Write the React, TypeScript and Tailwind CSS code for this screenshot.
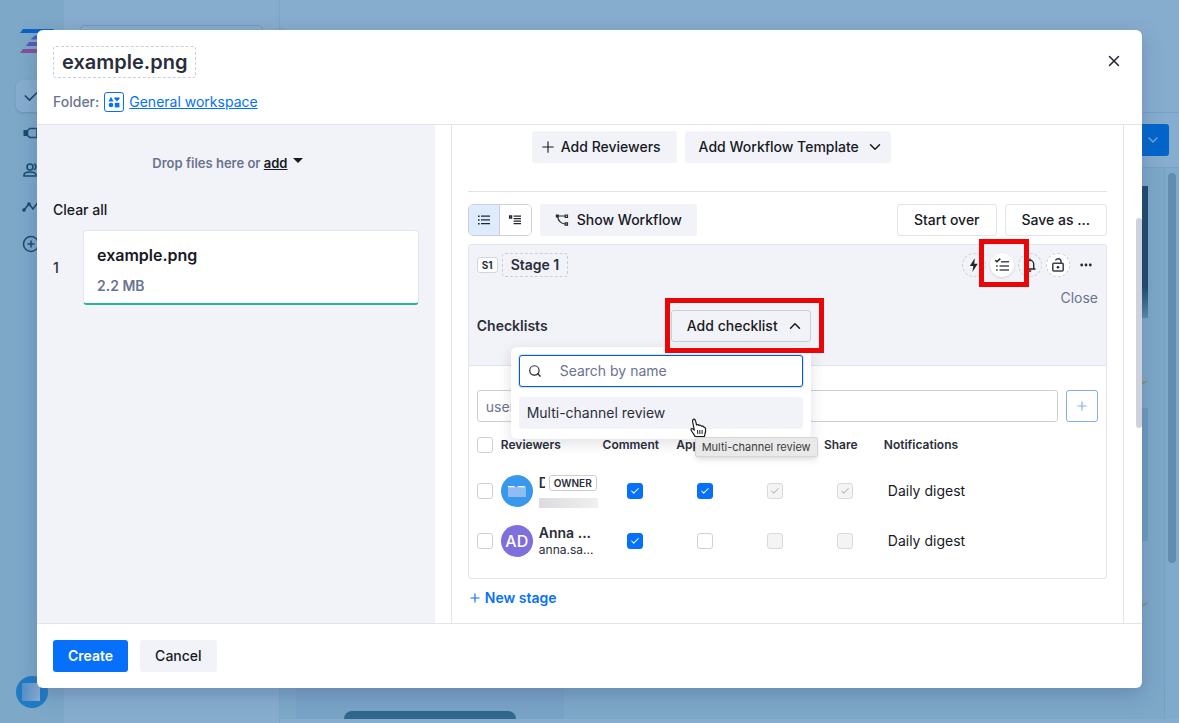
import React from "react";
import clsx from "clsx";
import {
  Check,
  ChevronDown,
  ChevronUp,
  CirclePlus,
  Plus,
  Search,
  X,
} from "lucide-react";

type Permission = {
  checked: boolean;
  disabled?: boolean;
};

type Reviewer = {
  id: string;
  name: string;
  email: string;
  initials?: string;
  owner?: boolean;
  permissions: Permission[];
  notifications: string;
};

const columns = ["Comment", "Approve", "Download", "Share"];

const reviewers: Reviewer[] = [
  {
    id: "owner",
    name: "D",
    email: "",
    owner: true,
    permissions: [
      { checked: true },
      { checked: true },
      { checked: true, disabled: true },
      { checked: true, disabled: true },
    ],
    notifications: "Daily digest",
  },
  {
    id: "anna",
    name: "Anna ...",
    email: "anna.sa...",
    initials: "AD",
    permissions: [
      { checked: true },
      { checked: false },
      { checked: false, disabled: true },
      { checked: false, disabled: true },
    ],
    notifications: "Daily digest",
  },
];

const Checkbox = ({
  label,
  checked = false,
  disabled = false,
}: {
  label: string;
  checked?: boolean;
  disabled?: boolean;
}) => (
  <label className="grid place-items-center *:[grid-area:1/1]">
    <input
      type="checkbox"
      aria-label={label}
      defaultChecked={checked}
      disabled={disabled}
      className={clsx(
        "peer h-4 w-4 appearance-none rounded-[3px] border",
        disabled
          ? "border-[#d9dadd] bg-[#f4f4f5]"
          : "border-[#cfd1d8] bg-white checked:border-[#0670fb] checked:bg-[#0670fb]"
      )}
    />
    <Check
      className={clsx(
        "pointer-events-none hidden h-2.5 w-2.5 peer-checked:block",
        disabled ? "text-[#b5b7bb]" : "text-white"
      )}
      strokeWidth={2.5}
    />
  </label>
);

/* ---------- Icons ---------- */

const ListIcon = () => (
  <svg viewBox="0 0 14 14" className="h-3.5 w-3.5" fill="#23262f">
    <path d="M1 2.5h1.6v1.4H1zM4 2.5h9v1.2H4zM1 6.3h1.6v1.4H1zM4 6.3h9v1.2H4zM1 10.1h1.6v1.4H1zM4 10.1h9v1.2H4z" />
  </svg>
);

const DetailIcon = () => (
  <svg viewBox="0 0 14 14" className="h-3.5 w-3.5" fill="#23262f">
    <path
      d="M1.6 3h2v2h-2z"
      fill="none"
      stroke="#23262f"
      strokeWidth="1.3"
    />
    <path d="M5.6 2.5H13v1.2H5.6zM5.6 5H13v1.2H5.6zM5.6 7.5H13v1.2H5.6zM5.6 10H13v1.2H5.6z" />
  </svg>
);

const WorkflowIcon = () => (
  <svg
    viewBox="0 0 14 14"
    className="h-3.5 w-3.5"
    fill="none"
    stroke="#23262f"
    strokeWidth="1.2"
  >
    <path d="M3 3h7M2.8 4c.4 3.6 2.6 6.2 7 7" />
    <path d="M1.400 2h1.800v1.800H1.400z" fill="#23262f" />
    <path d="M10.2 2h2.3v2.3h-2.3zM10.2 9.8h2.3v2.3h-2.3z" />
  </svg>
);

const ChecklistIcon = () => (
  <svg viewBox="0 0 16 16" className="h-4 w-4" fill="none">
    <path
      d="M1.3 3.2l1.6 1.6L6.3 1.6"
      stroke="#23262f"
      strokeWidth="1.5"
    />
    <path
      d="M7 4.8h8M5.5 9H15M5.5 13H15M2 9h1.8M2 13h1.800"
      stroke="#4a4d58"
      strokeWidth="1.5"
    />
  </svg>
);

const BoltIcon = () => (
  <svg viewBox="0 0 16 16" className="h-4 w-4" fill="#23262f">
    <path d="M8.8 1L3.8 9h3.5L6.4 15l5.4-8.2H8.3z" />
  </svg>
);

const BellIcon = () => (
  <svg
    viewBox="0 0 16 16"
    className="h-4 w-4"
    fill="none"
    stroke="#23262f"
    strokeWidth="1.4"
  >
    <path d="M2.5 12h11M4.3 12V7a3.7 3.7 0 017.4 0v5M8 1.5v2M6.8 14h2.4" />
  </svg>
);

const LockOpenIcon = () => (
  <svg
    viewBox="0 0 16 16"
    className="h-4 w-4"
    fill="none"
    stroke="#3b3e49"
    strokeWidth="1.5"
  >
    <rect x="2.8" y="6.3" width="10.4" height="7.8" rx="1" />
    <path d="M11 6V4.3C11 .9 5.7.9 5.7 3.6" />
    <circle cx="8" cy="10.2" r="1.3" fill="#23262f" stroke="none" />
  </svg>
);

const PointerCursor = () => (
  <svg viewBox="0 0 17 20" className="h-5 w-[17px]">
    <path
      d="M5 18.5c-.5-1.7-1.6-2.6-2.6-4.2C1.5 12.8.6 12 1 11.2c.6-1 2-.4 3.3 1L2.7 4C2.4 2.5 2.8 1.3 3.7 1.2c1-.1 1.6.7 1.9 2L6.6 7c1-.7 2-.4 2.4.5 1-.6 2-.2 2.4.7 1-.4 2 0 2.3 1 .9-.2 1.6.4 1.8 1.4.3 2.200.4 3.400-.5 5l-.5 2.900z"
      fill="#fff"
      stroke="#1b1b1b"
      strokeWidth="1.2"
      strokeLinejoin="round"
    />
    <path
      d="M7.5 12l.3 4M9.8 12l.1 4M12.1 12v4"
      stroke="#1b1b1b"
      strokeWidth="1"
    />
  </svg>
);

const Logo = () => (
  <svg viewBox="0 0 34 26" className="h-[26px] w-[34px]">
    <path d="M3 0h31l-3 4H0z" fill="#0d62c4" />
    <path d="M15 6.5h14l-2 4H10.5z" fill="#3d5ecb" />
    <path d="M9 13h14l-2 4H6z" fill="#5e55b8" />
    <path d="M3 20h30l-3 4H0z" fill="#84509b" />
  </svg>
);

/* ---------- Page behind the dialog ---------- */

const AppBackdrop = () => (
  <div className="flex min-h-screen bg-[#86adce]" aria-hidden="true">
    <nav className="flex w-16 flex-col bg-[#7da8c8] pt-[29px] text-[#154a70]">
      <div className="pl-5">
        <Logo />
      </div>
      <div className="mt-[25px] ml-4 flex h-8 items-center rounded-md bg-[#86adce] pl-1.5 shadow-sm">
        <Check className="h-5 w-5" />
      </div>
      <div className="flex flex-1 flex-col gap-[19px] pt-3 pl-[22px]">
        <svg
          viewBox="0 0 18 18"
          className="h-[18px] w-[18px]"
          fill="none"
          stroke="currentColor"
          strokeWidth="1.6"
        >
          <path d="M3.500 6v6" strokeWidth="4" />
          <path d="M5.500 6.500L8 4.500h7v9H8l-2.500-2z" />
        </svg>
        <svg
          viewBox="0 0 18 18"
          className="h-[18px] w-[18px]"
          fill="none"
          stroke="currentColor"
          strokeWidth="1.6"
        >
          <circle cx="8" cy="6" r="3" />
          <path d="M2 15v-1c0-4 12-4 12 0v1zM12 3c2.5.5 2.5 5 0 6" />
        </svg>
        <svg
          viewBox="0 0 18 18"
          className="h-[18px] w-[18px]"
          fill="none"
          stroke="currentColor"
          strokeWidth="1.6"
        >
          <path d="M2 12l5-6 4 5 6-8" />
          <circle cx="2" cy="12" r="1" />
          <circle cx="7" cy="6" r="1" />
        </svg>
        <CirclePlus className="h-[18px] w-[18px]" />
      </div>
      <div className="mb-[15px] ml-4 flex h-8 w-8 items-center rounded-full bg-[#1f7bc3] pl-1.5">
        <div className="h-[18px] w-[18px] bg-linear-to-r from-[#558fc6] to-[#8ab0d8]" />
      </div>
    </nav>
    <div className="w-[216px] border-r border-[#7ba4c6] pt-[25px] pl-4">
      <div className="h-8 w-[183px] rounded-sm border border-[#7199bb]" />
    </div>
    <div className="flex flex-1 flex-col">
      <div className="flex h-[113px] items-start border-b border-[#78a1c3] pt-[28px]">
        <div className="-ml-3 h-6 w-6 rounded-full border border-[#7ba4c6]" />
      </div>
      <div className="flex h-[55px] items-center justify-end border-b border-[#78a1c3] pr-2.5">
        <div className="flex h-8 w-8 items-center justify-center rounded-[3px] bg-[#0265cb]">
          <ChevronDown className="h-4 w-4 text-[#75a9dc]" />
        </div>
      </div>
      <div className="flex flex-1 bg-[#7da8c8]">
        <div className="flex flex-1 flex-col justify-end pl-4">
          <div className="flex w-[268px] justify-center bg-[#79a3c6] pt-6">
            <div className="h-2 w-[172px] rounded-t-full bg-[#31678d]" />
          </div>
        </div>
        <div className="flex w-10 flex-col pt-[18px]">
          <div className="h-[100px] bg-[#1d496a]" />
          <div className="h-8 bg-linear-to-b from-[#1d496a] to-[#5b8eae]" />
          <div className="h-[66px] rounded-br-md border-b-2 border-[#84946b] bg-[#80aacb]" />
          <div className="mt-6 h-[133px] bg-[#6f9cbf]" />
          <div className="h-[65px] rounded-br-md border-b-2 border-[#84946b] bg-[#80aacb]" />
        </div>
        <div className="ml-4 w-[15px] border-l border-[#76a0c1] bg-[#80aacb] pt-[5px] pl-[3px]">
          <div className="h-[390px] w-2 rounded-full bg-[#628dae]" />
        </div>
      </div>
      <div className="h-1" />
    </div>
  </div>
);

/* ---------- Dialog parts ---------- */

const FilesPanel = () => (
  <aside className="bg-[#f2f3f8] px-4 pt-7">
    <p className="flex items-start justify-center pr-4 text-[13px] leading-5 font-semibold text-[#6a7390]">
      Drop files here or&nbsp;
      <button type="button" className="text-[#171a24] underline">
        add
      </button>
      <span className="mt-[5px] ml-1.5 h-0 w-0 border-x-[5px] border-t-[5px] border-x-transparent border-t-[#171a24]" />
    </p>
    <button
      type="button"
      className="mt-[27px] block text-sm leading-5 font-medium text-[#171a24]"
    >
      Clear all
    </button>
    <div className="mt-[10px] flex items-center">
      <span className="w-[30px] text-sm font-medium text-[#2a2e3b]">1</span>
      <div className="flex-1 rounded-sm border border-b-2 border-[#e4e6ee] border-b-[#25b894] bg-white px-[13px] pt-[14px] pb-[7px]">
        <h3 className="text-base leading-5 font-semibold text-[#171a24]">
          example.png
        </h3>
        <p className="mt-[11px] text-sm leading-5 font-semibold text-[#6a7390]">
          2.2 MB
        </p>
      </div>
    </div>
  </aside>
);

const ChecklistMenu = () => (
  <div className="absolute top-full right-0 z-10 mt-[5px] w-[300px] rounded-md bg-white p-2 pb-[10px] shadow-[0_4px_14px_rgba(30,35,60,0.14)]">
    <div className="flex h-8 items-center rounded-[3px] border border-[#0b5cc0] bg-white px-2 shadow-[0_0_0_1px_#cfe4fc]">
      <Search className="mr-[18px] h-3.5 w-3.5 text-[#23262f]" />
      <input
        type="text"
        aria-label="Search checklists"
        placeholder="Search by name"
        className="min-w-0 flex-1 bg-transparent text-sm outline-none placeholder:text-[#6a7390]"
      />
    </div>
    <button
      type="button"
      className="mt-[10px] flex h-8 w-full items-center rounded-[3px] bg-[#f2f3f8] px-2 text-sm text-[#2a2e3b]"
    >
      Multi-channel review
    </button>
    <div className="absolute top-[71px] left-[179px] z-20">
      <PointerCursor />
    </div>
    <div
      role="tooltip"
      className="absolute top-[90px] left-[184px] rounded-[2px] border border-[#d6d6d6] bg-[#e9e9e9] px-1.5 text-[11px] leading-[18px] whitespace-nowrap text-[#3b3b3b] shadow-md"
    >
      Multi-channel review
    </div>
  </div>
);

const StageActions = () => (
  <div className="flex items-center gap-1">
    <button
      type="button"
      aria-label="Automation"
      className="flex h-6 w-6 items-center justify-center rounded-full border border-dashed border-[#cdcfd8]"
    >
      <BoltIcon />
    </button>
    <div className="relative z-10">
      <button
        type="button"
        aria-label="Checklists"
        className="flex h-6 w-6 items-center justify-center rounded-full bg-white shadow-sm"
      >
        <ChecklistIcon />
      </button>
      <div className="pointer-events-none absolute -top-[14px] -right-[15px] -bottom-[10px] -left-[11px] border-[5px] border-[#ea0606]" />
    </div>
    <button
      type="button"
      aria-label="Reminders"
      className="flex h-6 w-6 items-center justify-center rounded-full border border-dashed border-[#cdcfd8]"
    >
      <BellIcon />
    </button>
    <button
      type="button"
      aria-label="Lock stage"
      className="flex h-6 w-6 items-center justify-center rounded-full border border-dashed border-[#cdcfd8] bg-white"
    >
      <LockOpenIcon />
    </button>
    <button
      type="button"
      aria-label="More"
      className="flex h-6 w-6 items-center justify-center"
    >
      <svg viewBox="0 0 12 4" className="h-1 w-3" fill="#23262f">
        <circle cx="1.7" cy="2" r="1.4" />
        <circle cx="6" cy="2" r="1.4" />
        <circle cx="10.3" cy="2" r="1.4" />
      </svg>
    </button>
  </div>
);

const Avatar = ({ initials }: { initials?: string }) => (
  <span
    className={clsx(
      "flex h-8 w-8 shrink-0 items-center justify-center rounded-full text-base font-medium text-white",
      initials ? "bg-[#7f6fdc]" : "bg-[#3898ec]"
    )}
  >
    {initials ?? (
      <svg viewBox="0 0 18 12" className="h-3 w-[18px]">
        <path d="M0 1h6l2 1h2l1-1h6l1 1v10H0z" fill="#8ebcf3" />
        <path d="M0 1h6l1 1.2H0zM10 1h6l1 1.2H9.5z" fill="#fff" />
      </svg>
    )}
  </span>
);

const ReviewersTable = () => (
  <table className="mt-[11px] w-full table-fixed text-left">
    <thead>
      <tr className="h-[33px] text-xs leading-5 text-[#2a2e3b] *:pt-0.5 *:align-top *:font-semibold">
        <th className="w-6">
          <span className="flex h-5 items-center">
            <Checkbox label="Select all reviewers" />
          </span>
        </th>
        <th className="w-[99px]">Reviewers</th>
        {columns.map((column) => (
          <th key={column} className="w-[70px] pr-2 text-center">
            {column}
          </th>
        ))}
        <th className="pl-1">Notifications</th>
      </tr>
    </thead>
    <tbody>
      {reviewers.map((reviewer) => (
        <tr key={reviewer.id} className="h-[50px]">
          <td>
            <span className="flex items-center">
              <Checkbox label={`Select ${reviewer.name}`} />
            </span>
          </td>
          <td>
            <div className="flex items-center gap-1.5">
              <Avatar initials={reviewer.initials} />
              <div className="min-w-0 text-[#2a2e3b]">
                <div className="flex h-[18px] items-center gap-1 text-sm font-semibold">
                  {reviewer.owner ? (
                    <>
                      <span className="w-1.5 overflow-hidden">
                        {reviewer.name}
                      </span>
                      <span className="rounded-[3px] border border-[#cdcfd8] px-1 text-[10px] leading-[14px]">
                        OWNER
                      </span>
                    </>
                  ) : (
                    reviewer.name
                  )}
                </div>
                {reviewer.email ? (
                  <div className="h-4 text-xs leading-4">{reviewer.email}</div>
                ) : (
                  <div className="mt-1.5 h-2.5 w-[59px] bg-linear-to-r from-[#dcdcde] to-[#f0f0f1]" />
                )}
              </div>
            </div>
          </td>
          {reviewer.permissions.map((permission, i) => (
            <td key={columns[i]}>
              <span className="flex items-center justify-center">
                <Checkbox
                  label={`${columns[i]} ${reviewer.name}`}
                  checked={permission.checked}
                  disabled={permission.disabled}
                />
              </span>
            </td>
          ))}
          <td className="pl-2 text-sm text-[#171a24]">
            {reviewer.notifications}
          </td>
        </tr>
      ))}
    </tbody>
  </table>
);

const StageCard = () => (
  <section className="mt-2 rounded-[3px] border border-[#e1e3ed]">
    <header className="border-b border-[#e1e3ed] bg-[#f2f3f8] px-2 pt-2 pb-[23px]">
      <div className="flex items-center">
        <span className="rounded-[3px] border border-[#d3d5de] bg-white px-1 text-[10px] leading-[14px] font-bold text-[#2a2e3b]">
          S1
        </span>
        <h3 className="ml-1 rounded-[3px] border border-dashed border-[#cdcfd8] px-2 text-sm leading-[22px] font-semibold text-[#2a2e3b]">
          Stage 1
        </h3>
        <div className="ml-auto">
          <StageActions />
        </div>
      </div>
      <div className="mt-[11px] flex justify-end">
        <button type="button" className="text-sm leading-5 text-[#6a7390]">
          Close
        </button>
      </div>
      <div className="mt-0.5 flex items-center">
        <h4 className="w-[194px] text-sm font-semibold text-[#2a2e3b]">
          Checklists
        </h4>
        <div className="relative">
          <button
            type="button"
            className="flex h-8 items-center gap-2 rounded-[3px] border border-[#cdcfd8] bg-[#f2f3f8] pr-1.5 pl-[15px] text-sm font-medium text-[#171a24]"
          >
            Add checklist
            <ChevronUp className="h-[18px] w-[18px]" />
          </button>
          <ChecklistMenu />
          <div className="pointer-events-none absolute -top-3 -right-[13px] -bottom-[11px] -left-1.5 z-20 border-[5px] border-[#ea0606]" />
        </div>
      </div>
    </header>
    <div className="px-2 pt-6 pb-3">
      <div className="flex gap-2">
        <input
          type="text"
          aria-label="Reviewer email"
          placeholder="user@example.com"
          className="h-8 min-w-0 flex-1 rounded-[3px] border border-[#cdcfd8] px-2 text-sm placeholder:text-[#6a7390]"
        />
        <button
          type="button"
          aria-label="Add reviewer"
          className="flex h-8 w-8 items-center justify-center rounded-[3px] border border-[#83aeea] text-[#83aeea]"
        >
          <Plus className="h-3.5 w-3.5" />
        </button>
      </div>
      <ReviewersTable />
    </div>
  </section>
);

const WorkflowPanel = () => (
  <main className="flex min-h-0 overflow-hidden pl-4">
    <div className="min-w-0 flex-1 border-x border-[#e1e3ed] px-4 pt-1.5">
      <div className="ml-16 flex gap-2">
        <button
          type="button"
          className="flex h-8 items-center gap-1 rounded-[3px] bg-[#f2f3f8] pr-4 pl-[7px] text-sm font-medium text-[#171a24]"
        >
          <Plus className="h-[18px] w-[18px]" strokeWidth={1.5} />
          Add Reviewers
        </button>
        <button
          type="button"
          className="flex h-8 items-center gap-[7px] rounded-[3px] bg-[#f2f3f8] pr-[7px] pl-[14px] text-sm font-medium text-[#171a24]"
        >
          Add Workflow Template
          <ChevronDown className="h-[18px] w-[18px]" />
        </button>
      </div>
      <hr className="mt-7 border-[#e1e3e8]" />
      <div className="mt-3 flex items-center gap-2">
        <div className="flex h-8 overflow-hidden rounded-[5px] border border-[#cdcfd8]">
          <button
            type="button"
            aria-label="List view"
            className="flex w-[31px] items-center justify-center border-r border-[#cdcfd8] bg-[#dcecfd]"
          >
            <ListIcon />
          </button>
          <button
            type="button"
            aria-label="Detail view"
            className="flex w-[31px] items-center justify-center bg-white"
          >
            <DetailIcon />
          </button>
        </div>
        <button
          type="button"
          className="flex h-8 items-center gap-2 rounded-[3px] bg-[#f2f3f8] pr-[15px] pl-[15px] text-sm font-medium text-[#171a24]"
        >
          <WorkflowIcon />
          Show Workflow
        </button>
        <button
          type="button"
          className="ml-auto h-8 rounded-[3px] border border-[#e1e3ed] px-4 text-sm font-medium text-[#171a24]"
        >
          Start over
        </button>
        <button
          type="button"
          className="h-8 rounded-[3px] border border-[#e1e3ed] px-4 text-sm font-medium text-[#171a24]"
        >
          Save as ...
        </button>
      </div>
      <StageCard />
      <button
        type="button"
        className="mt-[9px] flex items-center gap-[3px] text-sm leading-5 font-semibold text-[#0670fb]"
      >
        <Plus className="h-3.5 w-3.5" />
        New stage
      </button>
    </div>
    <div className="flex w-[18px] justify-end pt-[93px]">
      <div className="h-[210px] w-1.5 rounded-full bg-[#cfd2db]" />
    </div>
  </main>
);

const App = () => {
  return (
    <div className="relative font-[Inter,sans-serif]">
      <AppBackdrop />
      <div className="absolute inset-0 flex px-[37px] pt-[30px] pb-[35px]">
        <div
          role="dialog"
          aria-label="Create proof"
          className="flex min-w-0 flex-1 flex-col rounded-md bg-white shadow-[0_6px_20px_rgba(60,80,130,0.35)]"
        >
          <header className="flex items-start justify-between border-b border-[#e1e3ed] px-4 pt-4 pb-3">
            <div>
              <h1 className="w-fit rounded-[3px] border border-dashed border-[#cdcfd8] px-2 text-xl leading-[30px] font-semibold text-[#2a2e3b]">
                example.png
              </h1>
              <p className="mt-[14px] flex items-center text-sm leading-5 font-medium text-[#6a7390]">
                Folder:
                <span className="mx-[5px] flex h-5 w-5 items-center justify-center rounded-[3px] border border-[#0670fb]">
                  <svg viewBox="0 0 12 12" className="h-3 w-3 shrink-0" fill="#0670fb">
                    <path d="M3 .8L5.500 5.500H.5zM9 5.500L6.400 2.800C5.900 1.400 7.800.4 9 1.800c1.200-1.400 3.100-.4 2.600 1z" />
                    <circle cx="3" cy="9" r="2.3" />
                    <path d="M6.800 6.800h4.600v4.600H6.800z" />
                  </svg>
                </span>
                <a href="#workspace" className="font-normal text-[#0670fb] underline">
                  General workspace
                </a>
              </p>
            </div>
            <button
              type="button"
              aria-label="Close dialog"
              className="mt-1.5 mr-[3px] text-[#23262f]"
            >
              <X className="h-[18px] w-[18px]" />
            </button>
          </header>
          <div className="grid min-h-0 flex-1 grid-cols-[36%_minmax(0,1fr)]">
            <FilesPanel />
            <WorkflowPanel />
          </div>
          <footer className="flex gap-3 border-t border-[#e1e3ed] p-4">
            <button
              type="button"
              className="h-8 rounded-[3px] bg-[#0670fb] px-[15px] text-sm font-semibold text-white"
            >
              Create
            </button>
            <button
              type="button"
              className="h-8 rounded-[3px] bg-[#f2f3f8] px-[15px] text-sm font-medium text-[#171a24]"
            >
              Cancel
            </button>
          </footer>
        </div>
      </div>
    </div>
  );
};

export default App;
